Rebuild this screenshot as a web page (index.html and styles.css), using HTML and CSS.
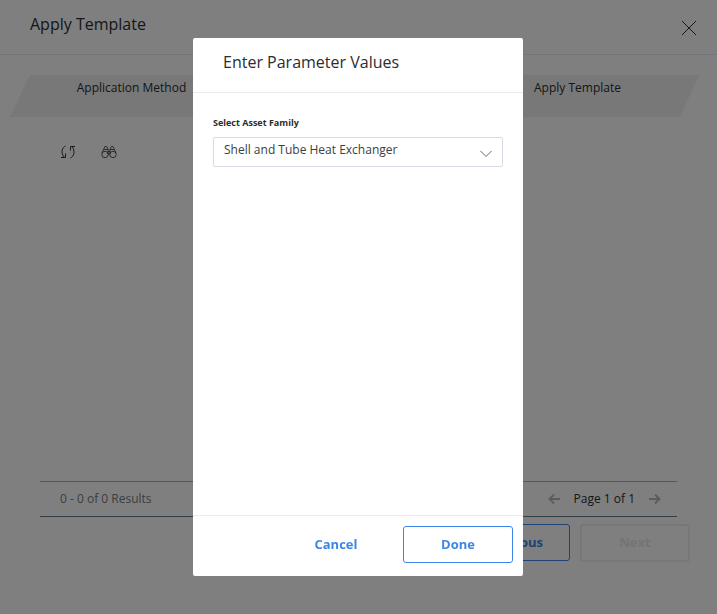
FILE: index.html
```html
<!DOCTYPE html>
<html lang="en">
<head>
<meta charset="utf-8">
<meta name="viewport" content="width=device-width, initial-scale=1">
<title>Apply Template</title>
<link rel="stylesheet" href="styles.css">
</head>
<body>
<div class="wizard">
  <header class="wizard-header">
    <h1 class="title">Apply Template</h1>
    <button class="icon-button" type="button" aria-label="Close">
      <svg width="16" height="16" viewBox="0 0 16 16"><path d="M1 1L15 15M15 1L1 15"/></svg>
    </button>
  </header>
  <ol class="steps">
    <li class="step">Application Method</li>
    <li class="step"></li>
    <li class="step">Apply Template</li>
  </ol>
  <main class="results">
    <div class="toolbar">
      <button class="icon-button" type="button" aria-label="Refresh">
        <svg width="16" height="14" viewBox="0 0 16 14"><path d="M5.500 1C2 2.500 .5 7.500 4 12M1 12.500H5.500V8.500M10.500 13C14 11.500 15.500 6 12 1.500M15 1.500H10.500V5.500"/></svg>
      </button>
      <button class="icon-button" type="button" aria-label="Find">
        <svg class="fine" width="16" height="14" viewBox="0 0 16 14"><circle cx="4" cy="9.500" r="3.200"/><circle cx="12" cy="9.500" r="3.200"/><path d="M1 8L3 3.500L4 1.500H5.500L7 4V9M15 8L13 3.500L12 1.500H10.500L9 4V9M3 4.500H7M9 4.500H13M7 6.500H9M7 9H9"/></svg>
      </button>
    </div>
    <div class="pager">
      <span class="count">0 - 0 of 0 Results</span>
      <nav class="pages" aria-label="Pages">
        <button class="icon-button arrow" type="button" aria-label="Previous page">
          <svg width="12" height="12" viewBox="0 0 12 12"><path d="M12 6H1.500M6 1.500L1.500 6L6 10.500"/></svg>
        </button>
        <span>Page 1 of 1</span>
        <button class="icon-button arrow" type="button" aria-label="Next page">
          <svg width="12" height="12" viewBox="0 0 12 12"><path d="M0 6H10.500M6 1.500L10.500 6L6 10.500"/></svg>
        </button>
      </nav>
    </div>
  </main>
  <footer class="wizard-footer">
    <button class="button outlined" type="button">Previous</button>
    <button class="button inactive" type="button" disabled>Next</button>
  </footer>
</div>
<div class="overlay">
  <section class="modal" role="dialog" aria-modal="true" aria-labelledby="modal-title">
    <header class="modal-header">
      <h2 class="title" id="modal-title">Enter Parameter Values</h2>
    </header>
    <div class="modal-body">
      <label class="field-label" for="family">Select Asset Family</label>
      <div class="select-wrap">
        <select class="select" id="family">
          <option>Shell and Tube Heat Exchanger</option>
        </select>
        <svg class="caret" width="12" height="8" viewBox="0 0 12 8"><path d="M.5 1L6 6.500L11.500 1"/></svg>
      </div>
    </div>
    <footer class="modal-footer">
      <button class="button" type="button">Cancel</button>
      <button class="button outlined" type="button">Done</button>
    </footer>
  </section>
</div>
</body>
</html>
```
FILE: styles.css
```css
* {
  box-sizing: border-box;
}

body {
  margin: 0;
  background: #fff;
  color: #2b2d2f;
  font: 12px/20px "Open Sans", "Noto Sans", sans-serif;
}

button,
select {
  font: inherit;
}

svg {
  display: block;
  fill: none;
  stroke: currentColor;
}

.wizard {
  display: flex;
  flex-direction: column;
  min-height: 100vh;
}

.wizard-header {
  display: flex;
  justify-content: space-between;
  height: 55px;
  padding: 12px 20px 0 30px;
  border-bottom: 1px solid #e8eaec;
}

.title {
  margin: 0;
  font-size: 16px;
  font-weight: 400;
  line-height: 24px;
}

.icon-button {
  display: grid;
  place-items: center;
  height: 32px;
  padding: 0;
  border: 0;
  background: none;
  color: #2b3440;
}

.fine {
  stroke-width: 0.8;
}

.steps {
  display: grid;
  grid-template-columns: repeat(3, 1fr);
  height: 42px;
  margin: 20px 18px 0 10px;
  padding: 3px 10px 0;
  background: #f0f0f0;
  clip-path: polygon(20px 0, 100% 0, calc(100% - 19px) 100%, 0 100%);
  list-style: none;
}

.step {
  text-align: center;
}

.results {
  display: flex;
  flex: 1;
  flex-direction: column;
  justify-content: space-between;
  margin: 0 40px;
}

.toolbar {
  display: flex;
  gap: 25px;
  padding: 19px 20px;
}

.pager {
  display: flex;
  align-items: center;
  justify-content: space-between;
  height: 36px;
  padding: 0 16px 0 20px;
  border-top: 1px solid #a3b5bf;
  border-bottom: 1px solid #677e8c;
}

.count {
  color: #787c82;
  font-weight: 500;
}

.pages {
  display: flex;
  align-items: center;
  gap: 14px;
}

.arrow {
  color: #b4b9bd;
  stroke-width: 2;
}

.wizard-footer {
  display: flex;
  justify-content: flex-end;
  gap: 10px;
  padding: 7px 27px 52px;
}

.button {
  width: 110px;
  height: 37px;
  padding: 0 0 2px;
  border: 1px solid transparent;
  border-radius: 3px;
  background: none;
  color: #3c86e8;
  font-size: 13px;
  font-weight: 700;
}

.outlined {
  border-color: #3c86e8;
}

.inactive {
  height: 38px;
  border: 2px solid #eee;
  color: #e8e8e8;
}

.overlay {
  position: fixed;
  inset: 0;
  display: flex;
  justify-content: center;
  padding: 38px 1px 38px 0;
  background: rgba(0, 0, 0, 0.5);
}

.modal {
  display: flex;
  flex-direction: column;
  width: 100%;
  max-width: 330px;
  border-radius: 2px;
  background: #fff;
}

.modal-header {
  height: 55px;
  padding: 12px 30px 0;
  border-bottom: 1px solid #e8eaec;
}

.modal-body {
  flex: 1;
  padding: 20px;
}

.field-label {
  display: block;
  height: 24px;
  font-size: 9px;
  font-weight: 700;
}

.select-wrap {
  display: grid;
  align-items: center;
}

.select-wrap > * {
  grid-area: 1 / 1;
}

.select {
  width: 100%;
  height: 30px;
  padding: 0 30px 5px 10px;
  border: 1px solid #d5dce3;
  border-radius: 2px;
  appearance: none;
  background: #fff;
  color: #3c3e40;
}

.caret {
  justify-self: end;
  margin: 3px 11px 0 0;
  color: #666;
  pointer-events: none;
}

.modal-footer {
  display: flex;
  justify-content: flex-end;
  gap: 12px;
  padding: 10px 10px 13px;
  border-top: 1px solid #e8eaec;
}
```
